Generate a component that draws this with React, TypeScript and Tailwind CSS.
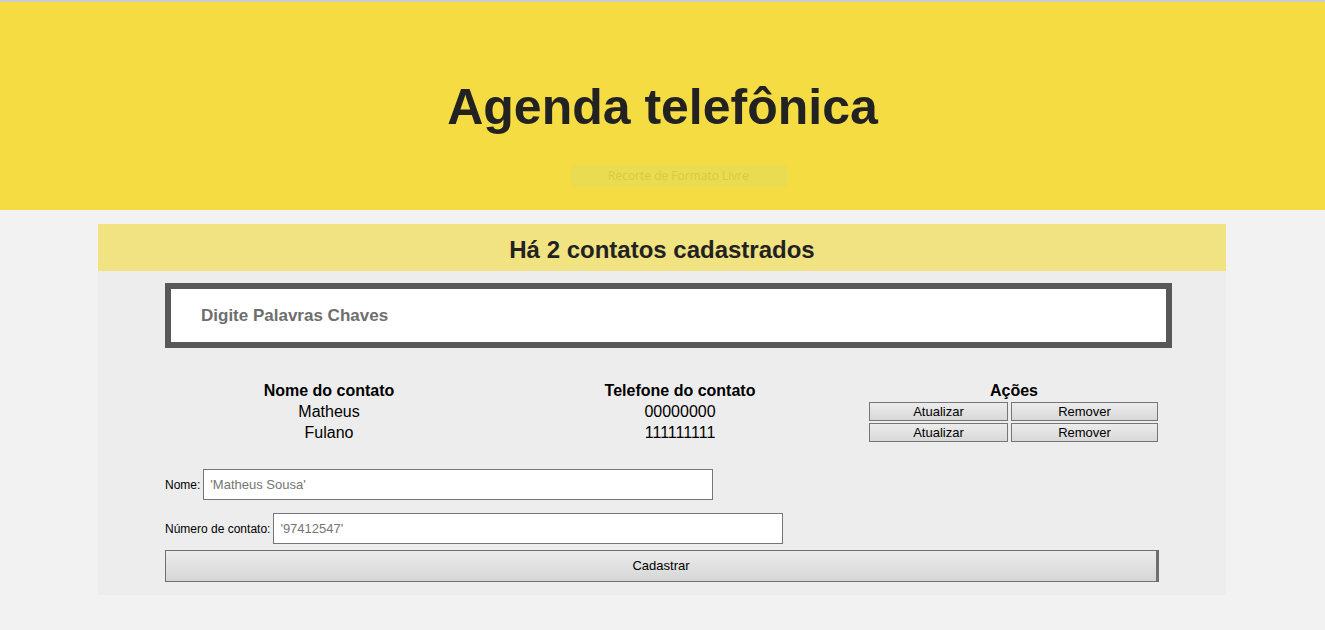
import React from "react";

const btn =
  "border border-[#767676] bg-gradient-to-b from-[#ececec] to-[#d8d8d8] text-[13px] leading-[16px] text-black";

export default function App() {
  const contacts = [
    { name: "Matheus", phone: "00000000" },
    { name: "Fulano", phone: "111111111" },
  ];
  return (
    <div
      className="min-h-[630px] bg-[#f2f2f2] border-t-2 border-[#cccccc]"
      style={{ fontFamily: '"Liberation Sans", Arial, sans-serif' }}
    >
      <header className="h-[208px] bg-[#f5dc42] flex flex-col items-center">
        <h1 className="mt-[76px] text-[50px] leading-[58px] font-bold text-[#222222]">
          Agenda telefônica
        </h1>
        <div
          className="mt-[29px] ml-[32px] w-[216px] h-[22px] bg-[#eadb52] flex items-center justify-center text-[12px] text-[#ddc843]"
          style={{ fontFamily: '"Open Sans", sans-serif' }}
        >
          Recorte de Formato Livre
        </div>
      </header>

      <main className="w-[1128px] ml-[98px] mt-[14px] bg-[#ededed] pb-[13px]">
        <div className="h-[47px] bg-[#f1e381] flex items-center justify-center pt-[5px]">
          <h2 className="text-[24px] font-bold text-[#222222] leading-[28px]">
            Há 2 contatos cadastrados
          </h2>
        </div>

        <div className="pl-[67px] pr-[54px]">
          <div className="mt-[12px] h-[65px] border-[6px] border-[#585858] bg-white flex items-center pl-[30px]">
            <span className="text-[17px] font-bold text-[#6e6e6e]">Digite Palavras Chaves</span>
          </div>

          <div className="mt-[34px] grid grid-cols-[328px_374px_292px] text-[16px] text-black leading-[18px]">
            <div className="text-center font-bold h-[19px]">Nome do contato</div>
            <div className="text-center font-bold h-[19px]">Telefone do contato</div>
            <div className="text-center font-bold h-[19px] pl-[2px]">Ações</div>
            {contacts.map((c) => (
              <React.Fragment key={c.name}>
                <div className="text-center h-[21px] flex items-center justify-center">{c.name}</div>
                <div className="text-center h-[21px] flex items-center justify-center">{c.phone}</div>
                <div className="h-[21px] flex items-center gap-[3px] pl-[2px]">
                  <button className={`${btn} w-[139px] h-[19px]`}>Atualizar</button>
                  <button className={`${btn} w-[147px] h-[19px]`}>Remover</button>
                </div>
              </React.Fragment>
            ))}
          </div>

          <div className="mt-[26px] flex items-center gap-[3px]">
            <label className="text-[12px] text-black">Nome:</label>
            <input
              placeholder="'Matheus Sousa'"
              className="w-[510px] h-[31px] border border-[#767676] bg-white px-[6px] text-[13px] placeholder:text-[#757575] outline-none"
            />
          </div>
          <div className="mt-[13px] flex items-center gap-[3px]">
            <label className="text-[12px] text-black">Número de contato:</label>
            <input
              placeholder="'97412547'"
              className="w-[510px] h-[31px] border border-[#767676] bg-white px-[6px] text-[13px] placeholder:text-[#757575] outline-none"
            />
          </div>
          <button
            className={`mt-[6px] w-[994px] h-[32px] border border-[#6e6e6e] border-r-[3px] bg-gradient-to-b from-[#ececec] to-[#d6d6d6] text-[13px] text-black`}
          >
            Cadastrar
          </button>
        </div>
      </main>
    </div>
  );
}
